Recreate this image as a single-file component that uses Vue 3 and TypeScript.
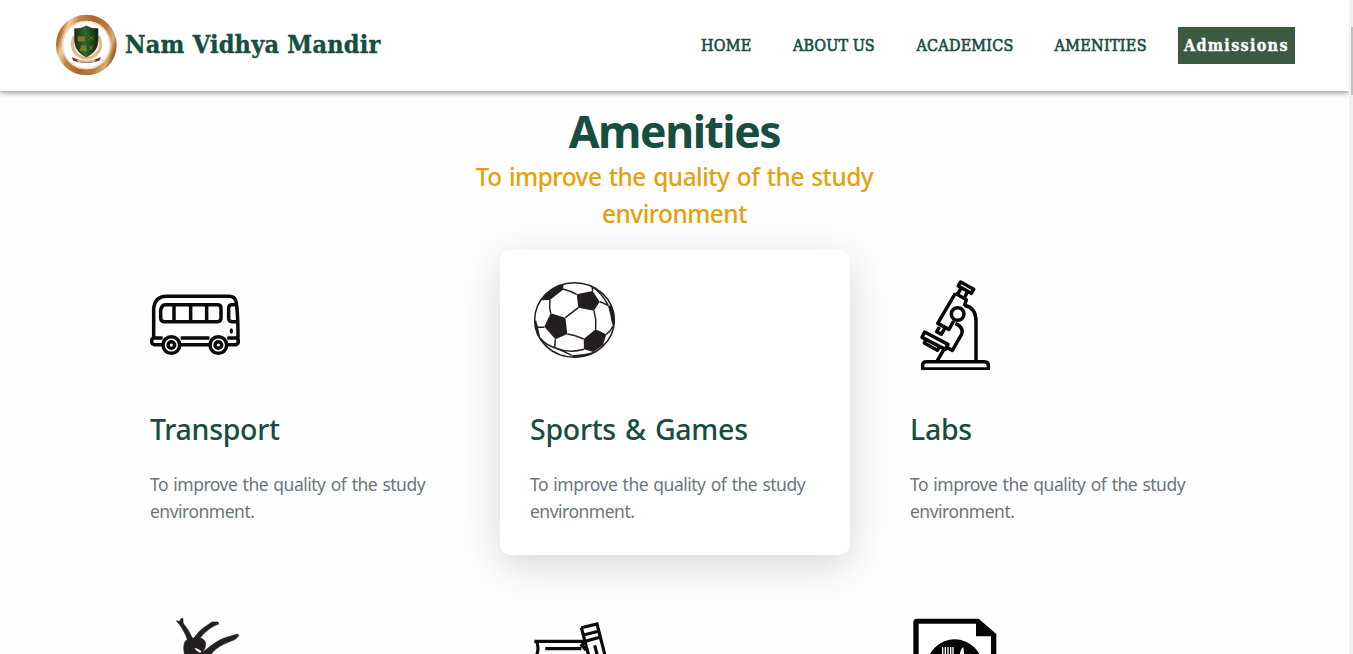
<script setup lang="ts">
interface NavLink { label: string; cls: string }
interface Amenity { title?: string; text?: string; icon: string; active?: boolean }

const links: NavLink[] = [
  { label: 'HOME', cls: 'home' },
  { label: 'ABOUT US', cls: 'about' },
  { label: 'ACADEMICS', cls: 'academics' },
  { label: 'AMENITIES', cls: 'amenities' },
]

const text = 'To improve the quality of the study environment.'

const amenities: Amenity[] = [
  { title: 'Transport', text, icon: 'bus' },
  { title: 'Sports & Games', text, icon: 'ball', active: true },
  { title: 'Labs', text, icon: 'microscope' },
  { icon: 'dance' },
  { icon: 'books' },
  { icon: 'canteen' },
]
</script>

<template>
  <div class="page">
    <div class="content">
      <header class="header">
        <div class="brand">
          <svg class="logo" viewBox="45 42 186 186">
            <defs>
              <linearGradient id="ring" x1="0" y1="0.35" x2="1" y2="0.65">
                <stop offset="0" stop-color="#b06c34" />
                <stop offset="0.1" stop-color="#efcfa0" />
                <stop offset="0.25" stop-color="#c08448" />
                <stop offset="0.5" stop-color="#a9672f" />
                <stop offset="0.75" stop-color="#b87a40" />
                <stop offset="0.92" stop-color="#dcae78" />
                <stop offset="1" stop-color="#a4602c" />
              </linearGradient>
              <linearGradient id="shield" x1="0" x2="1">
                <stop offset="0" stop-color="#16300f" />
                <stop offset="0.45" stop-color="#2f6a2b" />
                <stop offset="1" stop-color="#0d2410" />
              </linearGradient>
            </defs>
            <circle cx="139" cy="135" r="82" fill="#fff" stroke="url(#ring)" stroke-width="18" />
            <circle cx="139" cy="135" r="71" fill="none" stroke="#f0d8b0" stroke-width="4" />
            <path d="M103 108 Q88 145 113 165 Q139 185 166 165 Q191 145 176 108" fill="none" stroke="#e3b98a" stroke-width="9" />
            <path d="M106 94l12 10M172 94l-12 10" stroke="#8a4b35" stroke-width="6" />
            <path d="M139 78 Q155 88 174 86 V125 Q172 156 139 171 Q106 156 104 125 V86 Q123 88 139 78Z" fill="url(#shield)" stroke="#2b2a18" stroke-width="2" />
            <path d="M114 110h19v13h-19zM145 120l17-12M147 108l15 13M124 137h12l4 15h-19zM148 138l10 12M158 137l-9 14" fill="#7e7c2c" stroke="#94802f" stroke-width="2" />
            <path d="M95 171l14 6q30 12 60 0l14-6-5 11-12 3q-27 7-54 0l-12-3z" fill="#6b3328" />
            <path d="M112 181q27 8 54 0" fill="none" stroke="#e5bd83" stroke-width="5" />
          </svg>
          <span class="brand-name">Nam Vidhya Mandir</span>
        </div>
        <nav class="nav">
          <a v-for="link in links" :key="link.label" class="link" :class="link.cls">{{ link.label }}</a>
          <a class="admissions">Admissions</a>
        </nav>
      </header>

      <main class="main">
        <h1 class="title">Amenities</h1>
        <p class="subtitle">To improve the quality of the study<br />environment</p>
        <section class="grid">
          <article v-for="item in amenities" :key="item.icon" class="card" :class="{ active: item.active }">
            <svg v-if="item.icon === 'bus'" class="icon" viewBox="30 0 270 270" fill="none" stroke="#0a0a0a" stroke-width="10.500">
              <path d="M41 174V88Q43 50 80 49H268Q284 49 288 64Q294 95 294 174M42 174H68M122 174H208M262 174H292M68 194H42Q34 192 35 183Q35 175 42 174M262 194H288Q295 192 295 183Q295 175 288 174M121 194H208" />
              <path d="M76 74H232Q243 74 243 85V115Q243 125 232 125H72Q62 124 62 114V91Q64 75 76 74ZM102 74V125M152 74V125M200 74V125M288 74H274Q266 75 266 85V116Q267 125 276 125H293" />
              <circle cx="94" cy="195" r="25" /><circle cx="94" cy="195" r="10" />
              <circle cx="235" cy="195" r="25" /><circle cx="235" cy="195" r="10" />
              <ellipse cx="274" cy="153" rx="5" ry="8" fill="#111" stroke="none" />
            </svg>
            <svg v-else-if="item.icon === 'ball'" class="icon" viewBox="15 15 270 270">
              <defs><clipPath id="ballClip"><ellipse cx="148.500" cy="135" rx="121" ry="113" /></clipPath></defs>
              <g clip-path="url(#ballClip)">
                <g fill="#231f20">
                  <path d="M155 58L203 48L224 80L207 107L160 98Z" />
                  <path d="M77 115L121 128L127 177L91 193L58 155Z" />
                  <path d="M176 192L212 163L244 178L234 210L205 231L177 223Z" />
                  <path d="M45 76Q70 30 116 20L114 44L75 75Z" />
                  <path d="M249 92L259 91L272 120V150L264 153Q258 137 256 120Z" />
                  <path d="M20 135L34 137L39 157L46 190L28 170Z" />
                  <path d="M140 241Q172 240 207 231L190 250H145Z" />
                </g>
                <path d="M114 42Q137 48 155 58M203 48L200 25M200 35Q225 47 250 91M224 80Q238 84 249 92M75 75Q72 95 77 115M160 98L121 128M207 107Q215 135 212 163M127 177Q149 180 176 192M264 153Q258 168 244 178M39 157H58M91 193L89 218M46 190Q62 210 89 218Q112 226 140 241M89 218Q131 236 177 223" fill="none" stroke="#231f20" stroke-width="4.500" />
              </g>
              <ellipse cx="148.500" cy="135" rx="119.500" ry="112" fill="none" stroke="#231f20" stroke-width="4.500" />
            </svg>
            <svg v-else-if="item.icon === 'microscope'" class="icon" viewBox="15 30 270 270" fill="none" stroke="#080808" stroke-width="10.500" stroke-linejoin="round">
              <path d="M167 36L206 58L199 70L160 48ZM168 55L159 71M187 66L178 84" />
              <path d="M151 70L184 89L178 108M151 70L98 160L132 178L146 153" />
              <circle cx="158" cy="132" r="19" />
              <path d="M178 106Q213 113 213 154V273M151 160Q180 174 168 196L142 241L121 230M103 171L95 185L109 193L119 176" />
              <path d="M59 186L129 223L121 238L51 202ZM62 209L58 219L97 241L105 229M118 236L97 272" />
              <path d="M53 297V284Q54 275 64 275H239Q250 276 250 286V297Z" />
            </svg>
            <svg v-else-if="item.icon === 'dance'" class="icon" viewBox="30 45 270 270" fill="#231f20" stroke="#231f20" stroke-width="2">
              <path d="M109 63L119 64L124 55L129 56L129 69Q147 90 158 116L144 124Q139 106 128 88L117 71Z" />
              <path d="M160 116Q179 88 204 74L216 66L234 66L236 72L223 77L212 84Q190 98 176 120Z" />
              <path d="M134 164Q128 140 135 125Q143 113 165 114Q194 111 197 131Q197 145 188 157Q236 116 263 111L293 102L296 107L286 118L264 127Q237 137 218 156L196 190H150Z" />
              <path d="M163 145Q175 143 185 156L179 158Q170 154 163 145Z" fill="#fff" stroke="none" />
            </svg>
            <svg v-else-if="item.icon === 'books'" class="icon" viewBox="30 45 270 270" fill="none" stroke="#0b0b0b" stroke-width="9.500">
              <path d="M43 124H202M49 124Q59 143 49 168M76 146H184" />
              <path d="M184 83L231 72L256 170M184 83L207 170M190 105L236 94M196 124L240 112M224 136L233 170M194 124L185 136L198 151" />
            </svg>
            <svg v-else class="icon" viewBox="30 45 270 270">
              <path d="M40 320V65Q41 56 51 56H236L289 102V320" fill="#050505" />
              <path d="M56 320V71H228V109H273V320Z" fill="#fff" />
              <circle cx="164" cy="202" r="84" fill="#050505" />
              <path d="M128 141V177H159V141M136 141V165M144 141V165M152 141V165" fill="none" stroke="#fff" stroke-width="4" />
              <path d="M180 180V160Q183 145 190 141L194 180Z" fill="#fff" />
            </svg>
            <h2 v-if="item.title" class="card-title">{{ item.title }}</h2>
            <p v-if="item.text" class="card-text">{{ item.text }}</p>
          </article>
        </section>
      </main>
    </div>
    <div class="scrollbar"><div class="thumb"></div></div>
  </div>
</template>

<style>
body { overflow: hidden; background: #fefefe; }
</style>

<style scoped>
.page { display: flex; height: 654px; overflow: hidden; background: #fefefe; }
.content { width: 1349px; overflow: hidden; }
.header { box-sizing: border-box; height: 91px; padding: 0 54px 0 55px; display: flex; align-items: center; justify-content: space-between; background: #fff; box-shadow: 0 2px 5px rgba(0, 0, 0, .4); position: relative; }
.brand { display: flex; align-items: center; padding-bottom: 2px; }
.logo { width: 62px; height: 62px; margin-right: 8px; }
.brand-name { font: bold 25px/36px "DejaVu Serif Condensed", "DejaVu Serif", serif; letter-spacing: .22px; color: #184d42; white-space: nowrap; -webkit-text-stroke: .4px #184d42; }
.nav { display: flex; align-items: center; }
.link { font: 16px/24px "DejaVu Serif Condensed", "DejaVu Serif", serif; letter-spacing: .2px; color: #184d42; white-space: nowrap; -webkit-text-stroke: .6px #184d42; }
.home { width: 92px; }
.about { width: 123.5px; letter-spacing: .05px; }
.academics { width: 138px; }
.amenities { width: 123.500px; letter-spacing: .3px; }
.admissions { box-sizing: border-box; width: 117px; height: 37px; padding-left: 6px; background: #3b5a40; color: #fff; font: bold 16px/37px "DejaVu Serif Condensed", "DejaVu Serif", serif; letter-spacing: 1.3px; white-space: nowrap; -webkit-text-stroke: .3px #fff; }
.main { padding-top: 12px; }
.title { margin: 0; text-align: center; font: bold 44.5px/55px "Noto Sans", sans-serif; letter-spacing: -1.45px; color: #184d42; }
.subtitle { margin: 0; text-align: center; font: 500 24.4px/37px "Noto Sans", sans-serif; letter-spacing: -.5px; word-spacing: 1.5px; color: #e5a00d; }
.grid { display: grid; grid-template-columns: repeat(3, 350px); gap: 30px; padding: 18px 0 0 120px; }
.card { box-sizing: border-box; width: 350px; height: 305px; padding: 30px; border-radius: 10px; }
.active { background: #fff; box-shadow: 0 10px 40px rgba(0, 0, 0, .16); }
.icon { display: block; width: 90px; height: 90px; }
.card-title { margin: 37px 0 20px; font: 500 28.5px/44px "Noto Sans", sans-serif; letter-spacing: -.28px; word-spacing: 2px; color: #184d42; white-space: nowrap; }
.card-text { margin: 0; font: 17.5px/27px "Noto Sans", sans-serif; letter-spacing: -.5px; word-spacing: 1.2px; color: #6c757d; }
.scrollbar { width: 4px; background: #f1f1f1; padding-top: 27px; box-sizing: border-box; }
.thumb { width: 2px; height: 68px; margin-left: 2px; background: #c1c1c1; }
</style>
